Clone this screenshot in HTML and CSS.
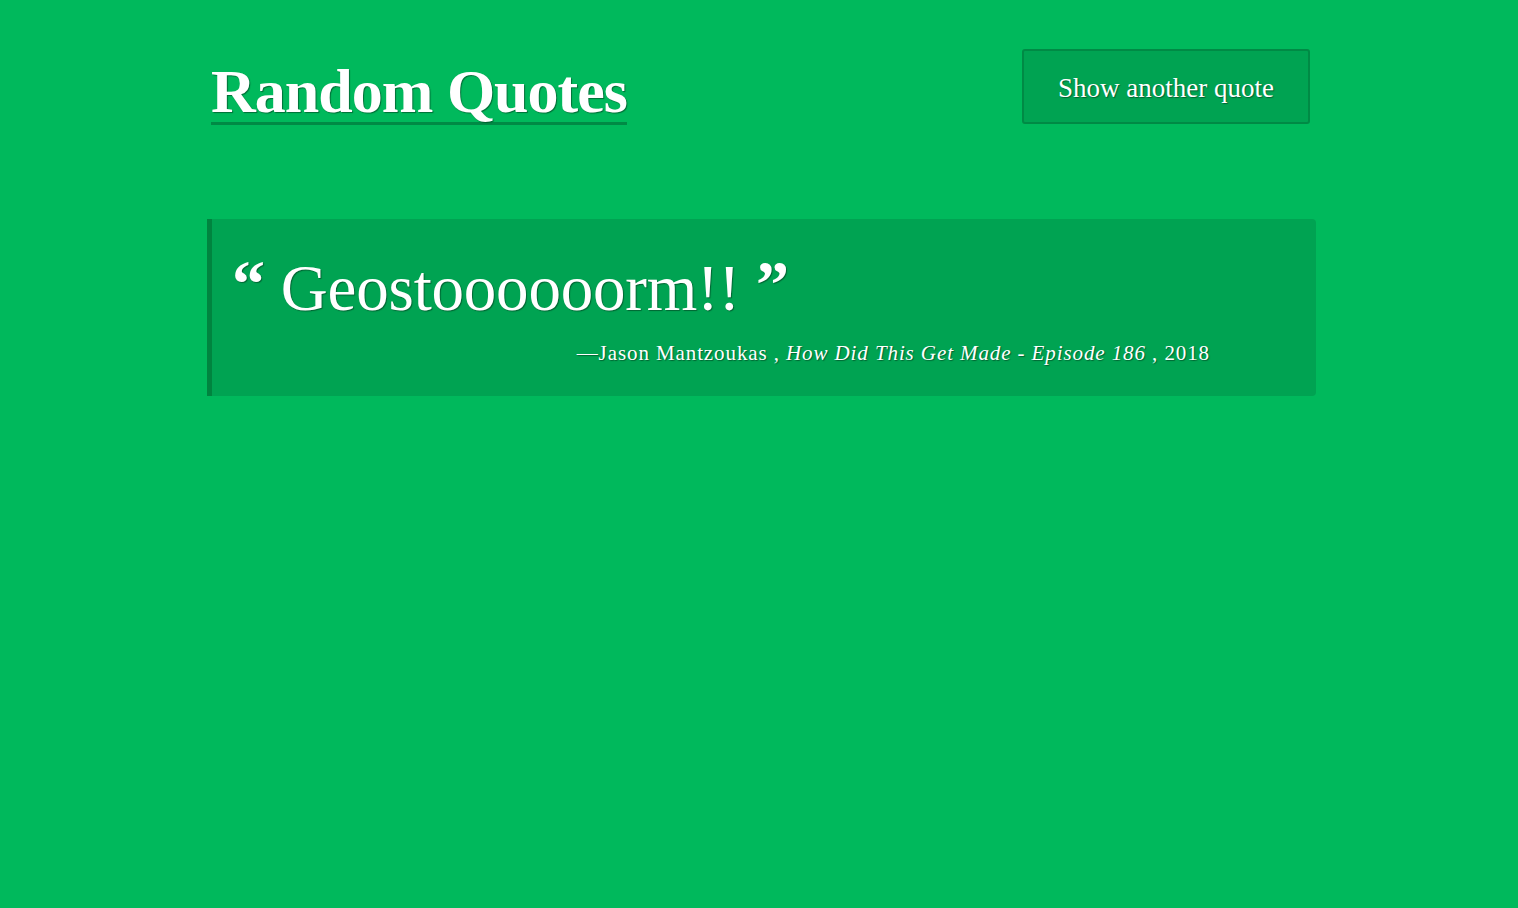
FILE: index.html
```html
<!DOCTYPE html>
<html lang="en">
<head>
<meta charset="utf-8">
<title>Random Quotes</title>
<link rel="stylesheet" href="styles.css">
</head>
<body>
<div class="container">
  <header class="header">
    <h1 class="title">Random Quotes</h1>
    <button class="btn">Show another quote</button>
  </header>
  <blockquote class="quote">
    <p class="quote-text"><span class="mark">“</span> Geostoooooorm!! <span class="mark">”</span></p>
    <p class="cite">—Jason Mantzoukas , <em>How Did This Get Made - Episode 186</em> , 2018</p>
  </blockquote>
</div>
</body>
</html>
```
FILE: styles.css
```css
html, body {
  margin: 0;
  padding: 0;
  background: #00b95c;
  height: 100%;
}
body {
  font-family: "Liberation Serif", "Times New Roman", serif;
  color: #fff;
  text-shadow: 1px 1px 1px rgba(0, 60, 30, 0.6);
}
.container {
  width: 1109px;
  margin: 0 auto;
  padding-left: 5px;
  box-sizing: content-box;
}
.header {
  display: flex;
  justify-content: space-between;
  align-items: flex-start;
  padding-top: 49px;
}
.title {
  margin: 0;
  margin-left: 4px;
  font-size: 62px;
  font-weight: 700;
  line-height: 61px;
  padding-top: 12px;
  padding-bottom: 0;
  border-bottom: 3px solid #008a45;
  letter-spacing: -1px;
}
.btn {
  width: 288px;
  height: 75px;
  margin-right: 6px;
  padding: 4px 0 0 0;
  background: #00a352;
  border: 2px solid #008a45;
  border-radius: 3px;
  color: #fff;
  font-family: inherit;
  font-size: 27px;
  text-shadow: inherit;
  cursor: pointer;
}
.quote {
  margin: 94px 0 0 0;
  background: #00a352;
  border-left: 5px solid #00843f;
  border-radius: 0 4px 4px 0;
  padding: 31px 24px 28px 20px;
}
.quote-text {
  margin: 0;
  font-size: 65px;
  line-height: 76px;
  letter-spacing: -0.2px;
}
.mark {
  font-size: 66px;
  font-weight: 700;
  line-height: 0;
  vertical-align: 4px;
}
.cite {
  margin: 12px 0 0 0;
  text-align: right;
  padding-right: 82px;
  font-size: 21px;
  line-height: 30px;
  letter-spacing: 0.9px;
}
```
